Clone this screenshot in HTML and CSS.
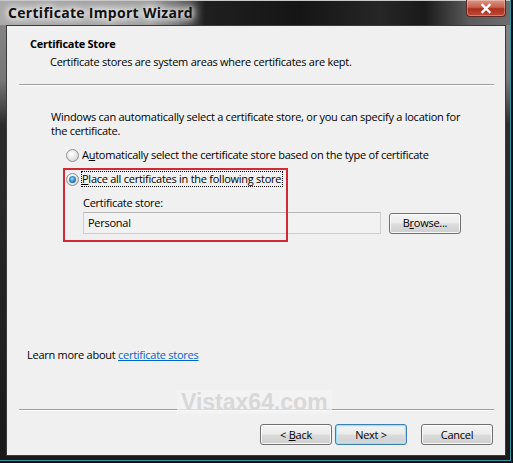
FILE: index.html
```html
<!DOCTYPE html>
<html lang="en">

<head>
    <meta charset="UTF-8">
    <meta name="viewport" content="width=device-width, initial-scale=1.0">
    <title>Certificate Import Wizard</title>
    <link rel="stylesheet" href="styles.css">
</head>

<body>
    <div class="window">
        <div class="titlebar">
            <span class="title">Certificate Import Wizard</span>
            <span class="close">
                <svg width="14" height="11" viewBox="0 0 14 11">
                    <path d="M3.5 2 L10.5 9 M10.5 2 L3.5 9" stroke="#fff" stroke-width="2.4" stroke-linecap="square" />
                </svg>
            </span>
        </div>
        <div class="client">
            <div class="header">
                <div class="header-title">Certificate Store</div>
                <div class="header-sub">Certificate stores are system areas where certificates are kept.</div>
            </div>
            <div class="sep"></div>
            <div class="body">
                <p class="intro">Windows can automatically select a certificate store, or you can specify a location for
                    the certificate.</p>
                <label class="radio"><span class="dot"></span><span>A<u>u</u>tomatically select the certificate store based on the type of certificate</span></label>
                <label class="radio checked"><span class="dot"></span><span class="focus"><u>P</u>lace all certificates in the following store</span></label>
                <div class="store">
                    <div class="store-label">Certificate store:</div>
                    <div class="store-row">
                        <div class="field">Personal</div>
                        <button class="btn">B<u>r</u>owse...</button>
                    </div>
                </div>
            </div>
            <div class="learn">Learn more about <a href="#">certificate stores</a></div>
            <div class="sep sep-bottom"></div>
            <div class="footer">
                <button class="btn">&lt; <u>B</u>ack</button>
                <button class="btn default">Next &gt;</button>
                <button class="btn cancel">Cancel</button>
            </div>
            <!-- annotation box and site mark drawn on top -->
            <div class="highlight"></div>
            <div class="watermark">Vistax64.com</div>
        </div>
    </div>
</body>

</html>
```

FILE: styles.css
```css
* {
    margin: 0;
    padding: 0;
    box-sizing: border-box;
}

body {
    width: 513px;
    height: 463px;
    overflow: hidden;
    font-family: "Open Sans", "Noto Sans", sans-serif;
    font-size: 11px;
    letter-spacing: -0.26px;
    color: #000;
}

.window {
    width: 513px;
    height: 463px;
    display: flex;
    flex-direction: column;
    padding: 0 7px 7px 6px;
    position: relative;
    background: linear-gradient(to bottom, #8a8a8a 0, #777 80px, #2c2c2c 125px, #1a1a1a 100%);
}

/* dark rim with the teal edge on the right and bottom */
.window::after {
    content: "";
    position: absolute;
    top: 0;
    left: 0;
    right: 0;
    bottom: 0;
    pointer-events: none;
    box-shadow: inset -2px -2px 0 #101010, inset -3px -3px 0 #3b94a6;
}

.titlebar {
    height: 25px;
    margin: 0 -7px 0 -6px;
    display: flex;
    align-items: flex-start;
    background: linear-gradient(to right, #a8a8a8 0, #9c9c9c 150px, #6c6c6c 178px, #1f1f1f 205px, #151515 300px, #262626 380px, #1a1a1a 425px, #5c5c5c 470px, #6e6e6e 100%);
    border-top: 1px solid #c8c8c8;
}

.title {
    font-weight: bold;
    font-size: 14px;
    letter-spacing: 0.3px;
    line-height: 24px;
    padding-left: 8px;
    color: #111;
    text-shadow: 0 0 6px #fff, 0 0 10px #fff, 0 0 14px #eee;
}

.close {
    margin-left: auto;
    margin-right: 7px;
    margin-top: -1px;
    width: 40px;
    height: 17px;
    display: flex;
    align-items: center;
    justify-content: center;
    border: 1px solid #5a2a22;
    border-top: none;
    border-radius: 0 0 4px 4px;
    background: linear-gradient(to bottom, #dc9686 0, #c9604c 45%, #a9301f 55%, #c44a36 100%);
    box-shadow: inset 0 0 0 1px rgba(255, 255, 255, 0.3);
}

.client {
    flex: 1;
    display: flex;
    flex-direction: column;
    position: relative;
    background: #f0f0f0;
    border: 1px solid #3a3a3a;
}

.header {
    padding: 10px 0 0 0;
    line-height: 16px;
}

.header-title {
    font-weight: bold;
    padding-left: 23px;
}

.header-sub {
    margin-top: 2px;
    padding-left: 43px;
}

.sep {
    margin: 14px 11px 0 12px;
    border-top: 1px solid #a0a0a0;
    border-bottom: 1px solid #fff;
}

.body {
    padding-top: 24px;
    line-height: 14px;
}

.intro {
    padding-left: 44px;
    padding-right: 40px;
}

.radio {
    display: flex;
    align-items: center;
    gap: 3px;
    height: 16px;
    margin-top: 9px;
    padding-left: 59px;
}

.radio.checked {
    margin-top: 8px;
}

.dot {
    width: 13px;
    height: 13px;
    border-radius: 50%;
    border: 1px solid #8e8f8f;
    display: flex;
    align-items: center;
    justify-content: center;
    background: radial-gradient(circle at 40% 35%, #fff 0, #eaeaea 45%, #c9c9c9 100%);
}

.checked .dot::after {
    content: "";
    width: 7px;
    height: 7px;
    border-radius: 50%;
    background: radial-gradient(circle at 45% 40%, #a8e4ff 0, #3a92d0 40%, #0f4f86 100%);
}

.focus {
    outline: 1px dotted #000;
    outline-offset: 0;
    padding: 0 1px 0 0;
}

.store {
    padding-left: 76px;
    padding-right: 43px;
}

.store-label {
    margin-top: 8px;
    line-height: 16px;
}

.store-row {
    display: flex;
    align-items: center;
    gap: 8px;
    margin-top: 1px;
}

.field {
    width: 298px;
    height: 22px;
    line-height: 20px;
    padding-left: 4px;
    border: 1px solid #cdcdcd;
    border-top-color: #b8b8b8;
    background: #f2f2f2;
}

.btn {
    width: 72px;
    height: 21px;
    font: inherit;
    letter-spacing: inherit;
    color: #000;
    border: 1px solid #707070;
    border-radius: 3px;
    background: linear-gradient(to bottom, #f4f4f4 0, #ebebeb 48%, #dcdcdc 52%, #cfcfcf 100%);
    box-shadow: inset 0 0 0 1px rgba(255, 255, 255, 0.8);
}

.learn {
    margin-top: auto;
    padding-left: 20px;
    line-height: 16px;
}

.learn a {
    color: #0066cc;
}

.sep-bottom {
    margin-top: 46px;
}

.footer {
    display: flex;
    justify-content: flex-end;
    gap: 3px;
    padding: 13px 12px 10px 0;
}

.btn.default {
    border-color: #3c7fb1;
    box-shadow: inset 0 0 0 1px #9fdcf5, inset 0 0 3px 1px #c8ecfb;
}

.btn.cancel {
    margin-left: 11px;
}

.highlight {
    position: absolute;
    left: 56px;
    top: 142px;
    width: 225px;
    height: 74px;
    border: 2px solid #cf2a36;
}

.watermark {
    position: absolute;
    left: 170px;
    top: 364px;
    padding: 0 4px;
    font-family: "Liberation Sans", Arial, sans-serif;
    font-weight: bold;
    font-size: 23px;
    letter-spacing: 0;
    line-height: 24px;
    color: #d8d8d8;
    background: rgba(244, 244, 244, 0.7);
}
```
